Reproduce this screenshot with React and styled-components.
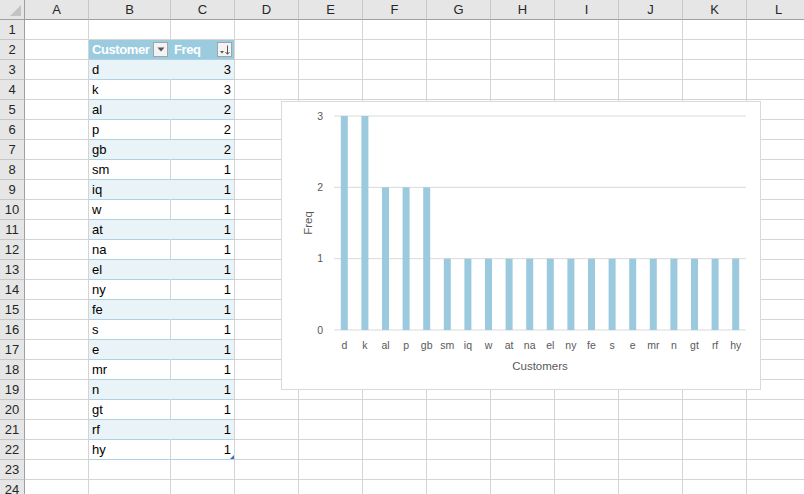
import React from 'react';
import styled, { createGlobalStyle } from 'styled-components';

const GlobalStyle = createGlobalStyle`
  body {
    margin: 0;
    overflow: hidden;
    background: #ffffff;
    font-family: "Liberation Sans", Arial, sans-serif;
  }
`;

const columns = ['A', 'B', 'C', 'D', 'E', 'F', 'G', 'H', 'I', 'J', 'K', 'L'];

const data = [
  ['d', 3], ['k', 3], ['al', 2], ['p', 2], ['gb', 2], ['sm', 1], ['iq', 1],
  ['w', 1], ['at', 1], ['na', 1], ['el', 1], ['ny', 1], ['fe', 1], ['s', 1],
  ['e', 1], ['mr', 1], ['n', 1], ['gt', 1], ['rf', 1], ['hy', 1],
];

const ROWS = 24;

const Sheet = styled.div`
  position: relative;
  display: grid;
  grid-template-columns: 25px 64px 82px repeat(10, 64px);
  grid-auto-rows: 20px;
  width: 804px;
  height: 494px;
  overflow: hidden;
`;

const Corner = styled.div`
  position: relative;
  background: #e6e6e6;
  border-right: 1px solid #9f9f9f;
  border-bottom: 1px solid #9f9f9f;
  box-sizing: border-box;

  &::after {
    content: '';
    position: absolute;
    right: 3px;
    bottom: 3px;
    border-left: 11px solid transparent;
    border-bottom: 11px solid #c3c3c3;
  }
`;

const ColHeader = styled.div`
  display: flex;
  align-items: center;
  justify-content: center;
  background: #e6e6e6;
  border-right: 1px solid #c6c6c6;
  border-bottom: 1px solid #9f9f9f;
  box-sizing: border-box;
  font-size: 13px;
  color: #262626;
`;

const RowHeader = styled.div`
  display: flex;
  align-items: center;
  justify-content: center;
  background: #e6e6e6;
  border-right: 1px solid #9f9f9f;
  border-bottom: 1px solid #c6c6c6;
  box-sizing: border-box;
  font-size: 13px;
  color: #262626;
`;

const bandBg = { head: '#9bcbdf', shade: '#e9f3f8', plain: '#ffffff' };

const Cell = styled.div`
  position: relative;
  display: flex;
  align-items: flex-end;
  justify-content: ${({ $right }) => ($right ? 'flex-end' : 'flex-start')};
  min-width: 0;
  padding: 0 3px 2px;
  box-sizing: border-box;
  font-size: 13px;
  line-height: 15px;
  color: #000;
  white-space: nowrap;
  background: ${({ $band }) => ($band ? bandBg[$band] : '#ffffff')};
  border-right: 1px solid
    ${({ $band, $inner }) =>
      $inner && ($band === 'head' || $band === 'shade') ? bandBg[$band] : '#d4d4d4'};
  border-bottom: 1px solid ${({ $band }) => ($band ? '#acd2e4' : '#d4d4d4')};
`;

const HeadCell = styled(Cell)`
  align-items: center;
  padding: 0 2px 0 3px;
`;

const HeadLabel = styled.span`
  flex: 1;
  min-width: 0;
  overflow: hidden;
  color: #ffffff;
  font-weight: bold;
  font-size: 13px;
  letter-spacing: -0.4px;
`;

const FilterButton = styled.span`
  display: flex;
  align-items: center;
  justify-content: center;
  width: 15px;
  height: 15px;
  background: #f3f3f3;
  border: 1px solid #a3a3a3;
  box-sizing: border-box;
  flex: none;
`;

const Handle = styled.span`
  position: absolute;
  right: 0;
  bottom: 0;
  border-left: 4px solid transparent;
  border-bottom: 4px solid #4a63b5;
`;

const ChartBox = styled.div`
  position: absolute;
  left: 281px;
  top: 101px;
  width: 480px;
  height: 289px;
  box-sizing: border-box;
  background: #ffffff;
  border: 1px solid #d9d9d9;

  svg {
    display: block;
    font-family: "Liberation Sans", Arial, sans-serif;
  }
`;

const DropIcon = () => (
  <svg width="8" height="5" viewBox="0 0 8 5">
    <path d="M0.5 0.5 L7.5 0.5 L4 4.5 Z" fill="#555" />
  </svg>
);

const SortIcon = () => (
  <svg width="12" height="10" viewBox="0 0 12 10">
    <path d="M1 6 L5 6 L3 8.5 Z" fill="#555" />
    <path d="M8.5 0.5 L8.5 9" stroke="#555" strokeWidth="1" />
    <path d="M6.5 7 L8.5 9.3 L10.5 7" stroke="#555" strokeWidth="1" fill="none" />
  </svg>
);

const Chart = () => {
  const x0 = 52;
  const x1 = 464;
  const yBase = 228;
  const step = 71.33;
  const cat = (x1 - x0) / data.length;
  const barW = 7;
  return (
    <ChartBox>
      <svg width="478" height="287" viewBox="0 0 478 287">
        {[0, 1, 2, 3].map((v) => (
          <g key={v}>
            <line x1={x0} x2={x1} y1={yBase - v * step} y2={yBase - v * step} stroke="#d9d9d9" strokeWidth="1" />
            <text x="41" y={yBase - v * step + 3.8} textAnchor="end" fontSize="10.5" fill="#595959">{v}</text>
          </g>
        ))}
        {data.map(([name, v], i) => (
          <g key={name}>
            <rect x={x0 + i * cat + (cat - barW) / 2} y={yBase - v * step} width={barW} height={v * step} fill="#9bcadf" />
            <text x={x0 + i * cat + cat / 2} y="247" textAnchor="middle" fontSize="10.5" fill="#595959">{name}</text>
          </g>
        ))}
        <text x="258" y="268" textAnchor="middle" fontSize="11.5" fill="#595959">Customers</text>
        <text x="25.5" y="121" textAnchor="middle" dominantBaseline="central" fontSize="11.5" fill="#595959" transform="rotate(-90 25.5 121)">Freq</text>
      </svg>
    </ChartBox>
  );
};

const App = () => {
  const rows = [];
  for (let r = 1; r <= ROWS; r++) {
    const item = r >= 3 && r <= 22 ? data[r - 3] : null;
    const band = r === 2 ? 'head' : item ? (r % 2 === 1 ? 'shade' : 'plain') : null;
    rows.push(
      <React.Fragment key={r}>
        <RowHeader>{r}</RowHeader>
        {columns.map((c) => {
          if (c === 'B' && r === 2) {
            return (
              <HeadCell key={c} $band="head" $inner>
                <HeadLabel>Customer</HeadLabel>
                <FilterButton><DropIcon /></FilterButton>
              </HeadCell>
            );
          }
          if (c === 'C' && r === 2) {
            return (
              <HeadCell key={c} $band="head">
                <HeadLabel>Freq</HeadLabel>
                <FilterButton><SortIcon /></FilterButton>
              </HeadCell>
            );
          }
          if (c === 'B' && band) {
            return (
              <Cell key={c} $band={band} $inner>
                {item[0]}
              </Cell>
            );
          }
          if (c === 'C' && band) {
            return (
              <Cell key={c} $band={band} $right>
                {item[1]}
                {r === 22 && <Handle />}
              </Cell>
            );
          }
          return <Cell key={c} />;
        })}
      </React.Fragment>
    );
  }

  return (
    <>
      <GlobalStyle />
      <Sheet>
        <Corner />
        {columns.map((c) => (
          <ColHeader key={c}>{c}</ColHeader>
        ))}
        {rows}
        <Chart />
      </Sheet>
    </>
  );
};

export default App;
